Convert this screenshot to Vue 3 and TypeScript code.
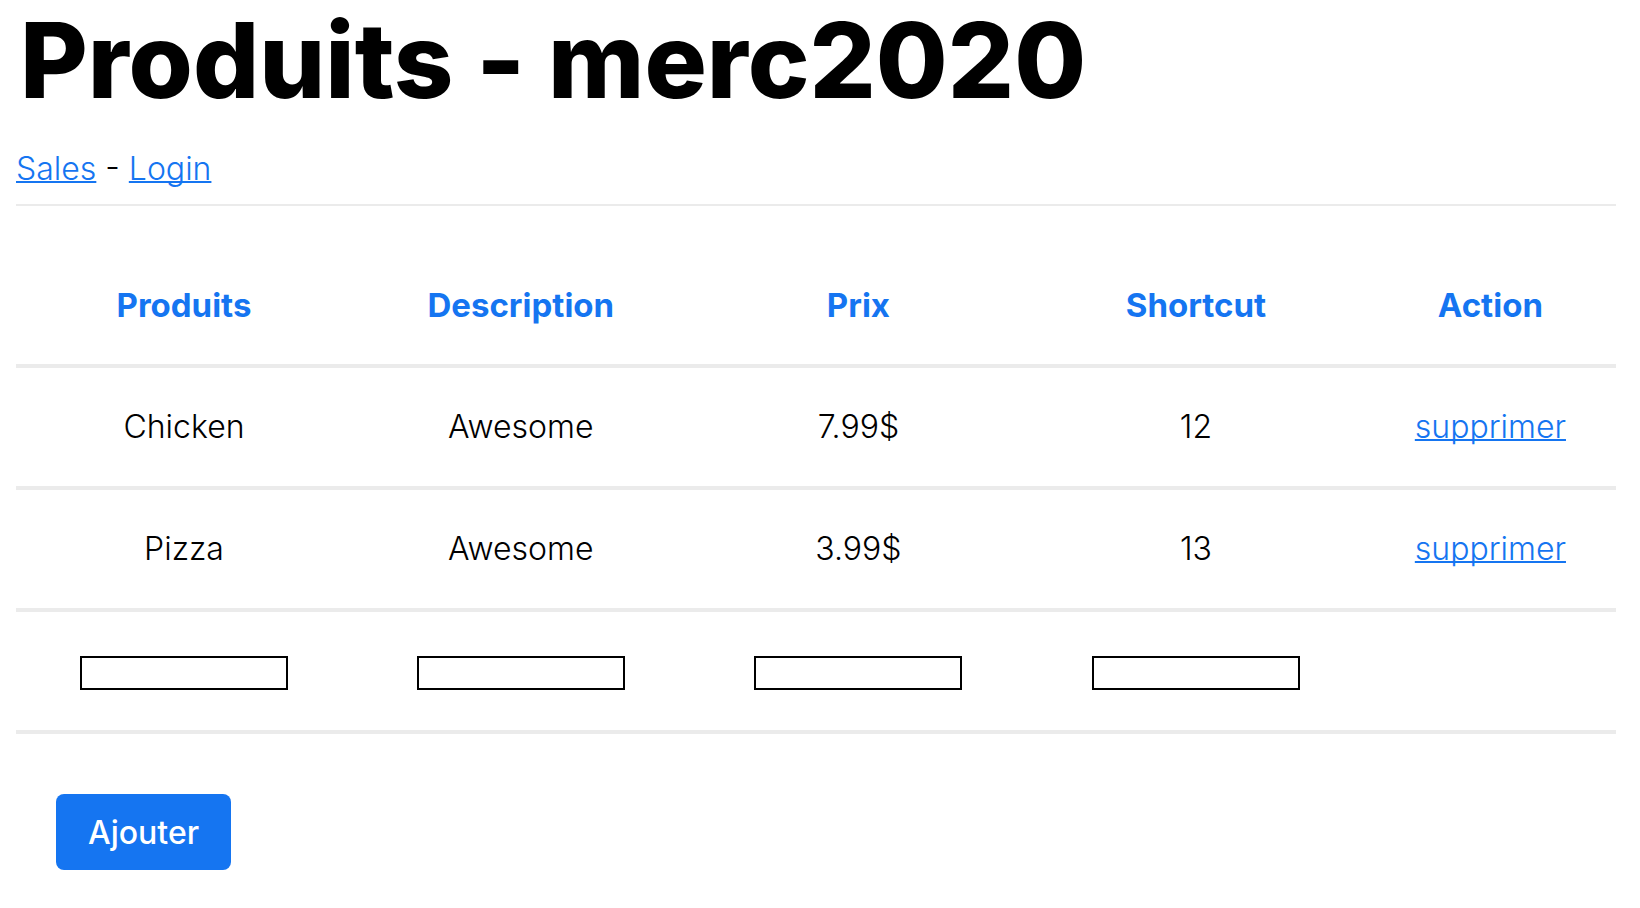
<script setup lang="ts">
import { reactive } from 'vue'

interface Product {
  name: string
  description: string
  price: string
  shortcut: number
}

const products = reactive<Product[]>([
  { name: 'Chicken', description: 'Awesome', price: '7.99$', shortcut: 12 },
  { name: 'Pizza', description: 'Awesome', price: '3.99$', shortcut: 13 },
])

const draft = reactive({ name: '', description: '', price: '', shortcut: '' })

function add() {
  products.push({
    name: draft.name,
    description: draft.description,
    price: draft.price + '$',
    shortcut: Number(draft.shortcut),
  })
}

function remove(index: number) {
  products.splice(index, 1)
}
</script>

<template>
  <main class="page">
    <h1>Produits - merc2020</h1>
    <nav><a href="#sales">Sales</a> - <a href="#login">Login</a></nav>
    <form @submit.prevent="add">
      <table>
        <colgroup>
          <col class="c1" /><col class="c2" /><col class="c2" /><col class="c2" /><col class="c5" />
        </colgroup>
        <thead>
          <tr>
            <th scope="col">Produits</th>
            <th scope="col">Description</th>
            <th scope="col">Prix</th>
            <th scope="col">Shortcut</th>
            <th scope="col">Action</th>
          </tr>
        </thead>
        <tbody>
          <tr v-for="(p, i) in products" :key="i">
            <td>{{ p.name }}</td>
            <td>{{ p.description }}</td>
            <td>{{ p.price }}</td>
            <td>{{ p.shortcut }}</td>
            <td><a href="#supprimer" @click.prevent="remove(i)">supprimer</a></td>
          </tr>
          <tr>
            <td><input v-model="draft.name" type="text" aria-label="Produits" /></td>
            <td><input v-model="draft.description" type="text" aria-label="Description" /></td>
            <td><input v-model="draft.price" type="text" aria-label="Prix" /></td>
            <td><input v-model="draft.shortcut" type="text" aria-label="Shortcut" /></td>
            <td></td>
          </tr>
        </tbody>
      </table>
      <button type="submit">Ajouter</button>
    </form>
  </main>
</template>

<style>
body {
  margin: 0;
  background: #fff;
}
</style>

<style scoped>
.page {
  padding: 0 24px 0 16px;
  color: #000;
  font: 300 32px/38px Inter, "Liberation Sans", sans-serif;
}
h1 {
  margin: 0;
  padding-left: 4px;
  font-size: 104px;
  font-weight: 800;
  line-height: 120px;
}
nav {
  padding: 30px 0 16px;
  border-bottom: 2px solid #ebebeb;
}
a {
  color: #1575f1;
  text-decoration-thickness: 2px;
  text-decoration-skip-ink: none;
}
table {
  width: 100%;
  margin-top: 40px;
  table-layout: fixed;
  border-collapse: collapse;
}
.c1 {
  width: 21%;
}
.c2 {
  width: 21.1%;
}
.c5 {
  width: 15.7%;
}
th,
td {
  height: 118px;
  padding: 0;
  border-bottom: 4px solid #ebebeb;
  text-align: center;
  vertical-align: middle;
}
th {
  color: #1575f1;
  font-size: 33px;
  font-weight: 700;
}
input {
  box-sizing: border-box;
  display: block;
  width: 208px;
  height: 34px;
  margin: 4px auto 0;
  padding: 2px;
  border: 2px solid #000;
  border-radius: 0;
  background: #fff;
  font: 400 22px/26px Inter, sans-serif;
}
button {
  display: block;
  margin: 60px 0 0 40px;
  padding: 20px 32px 18px;
  border: 0;
  border-radius: 8px;
  background: #1575f1;
  color: #fff;
  font: 500 32px/38px Inter, "Liberation Sans", sans-serif;
}
</style>
